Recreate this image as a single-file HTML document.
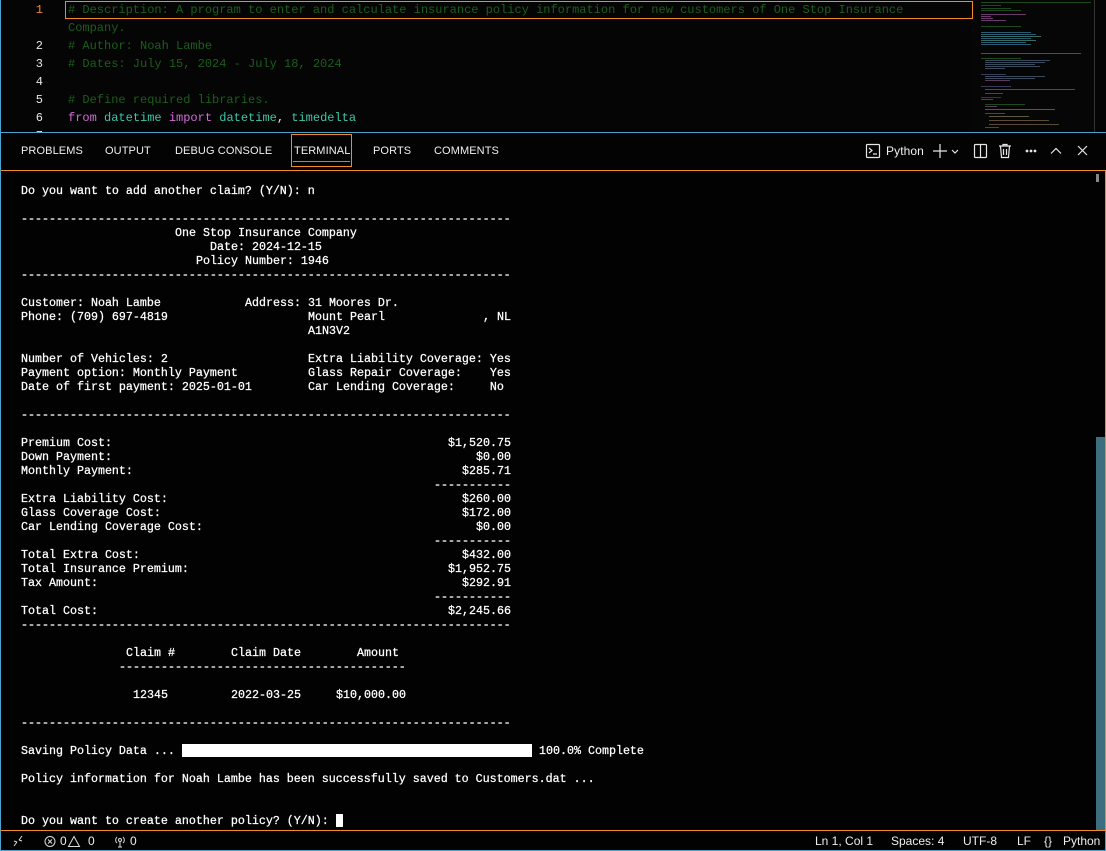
<!DOCTYPE html>
<html><head><meta charset="utf-8"><style>
*{margin:0;padding:0;box-sizing:border-box}
body{width:1106px;height:851px;background:#000;overflow:hidden;position:relative;font-family:"Liberation Sans",sans-serif;color:#e6e6e6}
.ed{position:absolute;left:0;top:0;width:1106px;height:132px;background:#050505;border-left:1px solid #4aa3cf}
.ln{position:absolute;left:20px;width:22px;text-align:right;font:12px/18px "Liberation Mono",monospace;color:#e8e8e8}
.cd{position:absolute;left:67px;font:12px/18px "Liberation Mono",monospace;white-space:pre;color:#1b5e1b}
.kw{color:#d46ad8}.ty{color:#3fc5a6}.pl{color:#e6e6e6}
.panel{position:absolute;left:0;top:132px;width:1106px;height:698px;background:#030303;border-top:1px solid #4aa3cf;border-left:1px solid #4aa3cf}
.tab{position:absolute;top:145px;font-size:11px;color:#f0f0f0;letter-spacing:0.1px}
.term{position:absolute;left:1px;top:170px;width:1105px;height:660px;border:1px solid #f08a24;border-left:none;border-bottom:none;background:#020202}
.r{position:absolute;left:21px;height:14px;font:11.67px/14px "Liberation Mono",monospace;white-space:pre;color:#fff;-webkit-text-stroke:0.25px #fff}
.r span{position:absolute;top:0}
.sb{position:absolute;left:0;top:830px;width:1106px;height:21px;background:#020202;border-top:1px solid #f08a24;border-bottom:1px solid #4aa3cf;border-left:1px solid #4aa3cf;border-right:1px solid #4aa3cf;font-size:12px;color:#eee}
.sb span{position:absolute;top:3px}
.mm{position:absolute;height:1px}
</style></head><body>
<div class="ed">
 <div style="position:absolute;left:64px;top:1px;width:908px;height:18px;border:1px solid #f08a24"></div>
 <div class="ln" style="top:1px;color:#f08a24">1</div>
 <div class="ln" style="top:37px">2</div>
 <div class="ln" style="top:55px">3</div>
 <div class="ln" style="top:73px">4</div>
 <div class="ln" style="top:91px">5</div>
 <div class="ln" style="top:109px">6</div>
 <div class="ln" style="top:127px">7</div>
 <div class="cd" style="top:1px"># Description: A program to enter and calculate insurance policy information for new customers of One Stop Insurance</div>
 <div class="cd" style="top:19px">Company.</div>
 <div class="cd" style="top:37px"># Author: Noah Lambe</div>
 <div class="cd" style="top:55px"># Dates: July 15, 2024 - July 18, 2024</div>
 <div class="cd" style="top:91px"># Define required libraries.</div>
 <div class="cd" style="top:109px"><span class="kw">from</span> <span class="ty">datetime</span> <span class="kw">import</span> <span class="ty">datetime</span><span class="pl">,</span> <span class="ty">timedelta</span></div>
 <div style="position:absolute;left:972px;top:0;width:121px;height:132px;background:#060606">
  <div class="mm" style="left:8px;top:2px;width:110px;background:#1d4a1d"></div>
  <div class="mm" style="left:8px;top:5px;width:20px;background:#1d4a1d"></div>
  <div class="mm" style="left:8px;top:8px;width:30px;background:#1d4a1d"></div>
  <div class="mm" style="left:8px;top:10px;width:40px;background:#1d4a1d"></div>
  <div class="mm" style="left:8px;top:14px;width:45px;background:#6a3a6a"></div>
  <div class="mm" style="left:8px;top:16px;width:10px;background:#6a3a6a"></div>
  <div class="mm" style="left:8px;top:18px;width:12px;background:#6a3a6a"></div>
  <div class="mm" style="left:8px;top:20px;width:25px;background:#6a3a6a"></div>
  <div class="mm" style="left:8px;top:26px;width:40px;background:#1d4a1d"></div>
  <div class="mm" style="left:8px;top:32px;width:50px;background:#2a5a70"></div>
  <div class="mm" style="left:8px;top:34px;width:55px;background:#2a5a70"></div>
  <div class="mm" style="left:8px;top:36px;width:60px;background:#3a6a60"></div>
  <div class="mm" style="left:8px;top:38px;width:50px;background:#2a5a70"></div>
  <div class="mm" style="left:8px;top:40px;width:55px;background:#3a6a60"></div>
  <div class="mm" style="left:8px;top:42px;width:45px;background:#2a5a70"></div>
  <div class="mm" style="left:8px;top:44px;width:50px;background:#2a5a70"></div>
  <div class="mm" style="left:8px;top:53px;width:100px;background:#2a5a70"></div>
  <div class="mm" style="left:8px;top:58px;width:40px;background:#1d4a1d"></div>
  <div class="mm" style="left:12px;top:60px;width:65px;background:#3a4a5a"></div>
  <div class="mm" style="left:12px;top:62px;width:60px;background:#3a4a5a"></div>
  <div class="mm" style="left:12px;top:64px;width:50px;background:#3a4a5a"></div>
  <div class="mm" style="left:12px;top:66px;width:55px;background:#3a4a5a"></div>
  <div class="mm" style="left:12px;top:68px;width:20px;background:#3a4a5a"></div>
  <div class="mm" style="left:8px;top:74px;width:25px;background:#3a3a5a"></div>
  <div class="mm" style="left:12px;top:76px;width:60px;background:#3a4a5a"></div>
  <div class="mm" style="left:12px;top:78px;width:50px;background:#3a4a5a"></div>
  <div class="mm" style="left:12px;top:80px;width:25px;background:#5a3a5a"></div>
  <div class="mm" style="left:8px;top:86px;width:30px;background:#3a3a5a"></div>
  <div class="mm" style="left:12px;top:89px;width:90px;background:#3a5a3a"></div>
  <div class="mm" style="left:12px;top:93px;width:18px;background:#5a3a5a"></div>
  <div class="mm" style="left:8px;top:97px;width:20px;background:#1d4a1d"></div>
  <div class="mm" style="left:8px;top:99px;width:12px;background:#5a3a5a"></div>
  <div class="mm" style="left:12px;top:104px;width:40px;background:#1d4a1d"></div>
  <div class="mm" style="left:12px;top:106px;width:12px;background:#5a3a5a"></div>
  <div class="mm" style="left:12px;top:109px;width:70px;background:#5a5a3a"></div>
  <div class="mm" style="left:12px;top:113px;width:20px;background:#5a3a5a"></div>
  <div class="mm" style="left:16px;top:116px;width:40px;background:#5a5a3a"></div>
  <div class="mm" style="left:16px;top:120px;width:60px;background:#5a4a3a"></div>
  <div class="mm" style="left:16px;top:124px;width:70px;background:#5a4a3a"></div>
  <div class="mm" style="left:12px;top:127px;width:14px;background:#5a3a5a"></div>
 </div>
 <div style="position:absolute;left:1093px;top:0;width:1px;height:132px;background:#333"></div>
</div>
<div class="panel"></div>
<div class="tab" style="left:21px">PROBLEMS</div>
<div class="tab" style="left:105px">OUTPUT</div>
<div class="tab" style="left:175px">DEBUG CONSOLE</div>
<div class="tab" style="left:294px">TERMINAL</div>
<div style="position:absolute;left:291px;top:134px;width:61px;height:33px;border:1px solid #f08a24"></div>
<div style="position:absolute;left:293px;top:161px;width:57px;height:1px;background:#4aa3cf"></div>
<div class="tab" style="left:373px">PORTS</div>
<div class="tab" style="left:434px">COMMENTS</div>
<svg style="position:absolute;left:860px;top:140px" width="240" height="22" viewBox="0 0 240 22" fill="none" stroke="#e6e6e6" stroke-width="1.2">
 <rect x="6.5" y="4.5" width="13" height="13" rx="1"/><path d="M9 8l3 2.5L9 13M13 14h4"/>
 <path d="M80 4v14M73 11h14"/><path d="M92 10l3 3 3-3"/>
 <rect x="114.5" y="4.5" width="12" height="13" rx="1"/><path d="M120.5 4.5v13"/>
 <path d="M139 6h12M143 6V4.5h4V6M140.5 6l1 11.5h7l1-11.5M143.5 9v6M146.5 9v6"/>
 <circle cx="167" cy="11" r="0.8" fill="#e6e6e6"/><circle cx="171" cy="11" r="0.8" fill="#e6e6e6"/><circle cx="175" cy="11" r="0.8" fill="#e6e6e6"/>
 <path d="M191 13.5l5-5 5 5"/><path d="M218 6l9 9M227 6l-9 9"/>
</svg>
<div class="tab" style="left:886px;font-size:12px;top:144px">Python</div>
<div class="term"></div>
<div style="position:absolute;left:1096px;top:174px;width:3px;height:8px;background:#888"></div>
<div style="position:absolute;left:1096px;top:437px;width:9px;height:393px;background:#3d6e80"></div>

<div class="r" style="top:184px">Do you want to add another claim? (Y/N): n</div>
<div class="r" style="top:212px">----------------------------------------------------------------------</div>
<div class="r" style="top:226px"><span style="left:154px">One Stop Insurance Company</span></div>
<div class="r" style="top:240px"><span style="left:189px">Date: 2024-12-15</span></div>
<div class="r" style="top:254px"><span style="left:175px">Policy Number: 1946</span></div>
<div class="r" style="top:268px">----------------------------------------------------------------------</div>
<div class="r" style="top:296px">Customer: Noah Lambe<span style="left:224px">Address: 31 Moores Dr.</span></div>
<div class="r" style="top:310px">Phone: (709) 697-4819<span style="left:287px">Mount Pearl</span><span style="left:462px">, NL</span></div>
<div class="r" style="top:324px"><span style="left:287px">A1N3V2</span></div>
<div class="r" style="top:352px">Number of Vehicles: 2<span style="left:287px">Extra Liability Coverage: Yes</span></div>
<div class="r" style="top:366px">Payment option: Monthly Payment<span style="left:287px">Glass Repair Coverage:    Yes</span></div>
<div class="r" style="top:380px">Date of first payment: 2025-01-01<span style="left:287px">Car Lending Coverage:     No</span></div>
<div class="r" style="top:408px">----------------------------------------------------------------------</div>
<div class="r" style="top:436px">Premium Cost:<span style="left:427px">$1,520.75</span></div>
<div class="r" style="top:450px">Down Payment:<span style="left:455px">$0.00</span></div>
<div class="r" style="top:464px">Monthly Payment:<span style="left:441px">$285.71</span></div>
<div class="r" style="top:478px"><span style="left:413px">-----------</span></div>
<div class="r" style="top:492px">Extra Liability Cost:<span style="left:441px">$260.00</span></div>
<div class="r" style="top:506px">Glass Coverage Cost:<span style="left:441px">$172.00</span></div>
<div class="r" style="top:520px">Car Lending Coverage Cost:<span style="left:455px">$0.00</span></div>
<div class="r" style="top:534px"><span style="left:413px">-----------</span></div>
<div class="r" style="top:548px">Total Extra Cost:<span style="left:441px">$432.00</span></div>
<div class="r" style="top:562px">Total Insurance Premium:<span style="left:427px">$1,952.75</span></div>
<div class="r" style="top:576px">Tax Amount:<span style="left:441px">$292.91</span></div>
<div class="r" style="top:590px"><span style="left:413px">-----------</span></div>
<div class="r" style="top:604px">Total Cost:<span style="left:427px">$2,245.66</span></div>
<div class="r" style="top:618px">----------------------------------------------------------------------</div>
<div class="r" style="top:646px"><span style="left:105px">Claim #</span><span style="left:210px">Claim Date</span><span style="left:336px">Amount</span></div>
<div class="r" style="top:660px"><span style="left:98px">-----------------------------------------</span></div>
<div class="r" style="top:688px"><span style="left:112px">12345</span><span style="left:210px">2022-03-25</span><span style="left:315px">$10,000.00</span></div>
<div class="r" style="top:716px">----------------------------------------------------------------------</div>
<div class="r" style="top:744px">Saving Policy Data ...<span style="left:161px;top:0;width:350px;height:13px;background:#fff"></span><span style="left:518px">100.0% Complete</span></div>
<div class="r" style="top:772px">Policy information for Noah Lambe has been successfully saved to Customers.dat ...</div>
<div class="r" style="top:814px">Do you want to create another policy? (Y/N): <span style="left:315px;top:0;width:7px;height:13px;background:#fff"></span></div>

<div class="sb">
 <svg style="position:absolute;left:10px;top:3px" width="14" height="14" fill="none" stroke="#ddd" stroke-width="1"><path d="M3 12l3-4M3 7l3 1M8 6l3-4M8 6l3 1"/></svg>
 <svg style="position:absolute;left:43px;top:4px" width="70" height="13" fill="none" stroke="#ddd" stroke-width="1">
  <circle cx="6" cy="6.5" r="5"/><path d="M4 4.5l4 4M8 4.5l-4 4"/>
  <path d="M30 1.5l5.5 10h-11z"/>
 </svg>
 <span style="left:59px">0</span><span style="left:87px">0</span>
 <svg style="position:absolute;left:112px;top:4px" width="14" height="13" fill="none" stroke="#ddd" stroke-width="1"><circle cx="7" cy="5" r="1.5"/><path d="M7 6.5v6M4 2a4 4 0 0 0 0 6M10 2a4 4 0 0 1 0 6M5 12h4"/></svg>
 <span style="left:129px">0</span>
 <span style="left:814px">Ln 1, Col 1</span>
 <span style="left:890px">Spaces: 4</span>
 <span style="left:962px">UTF-8</span>
 <span style="left:1016px">LF</span>
 <span style="left:1043px">{}</span>
 <span style="left:1062px">Python</span>
</div>
</body></html>
